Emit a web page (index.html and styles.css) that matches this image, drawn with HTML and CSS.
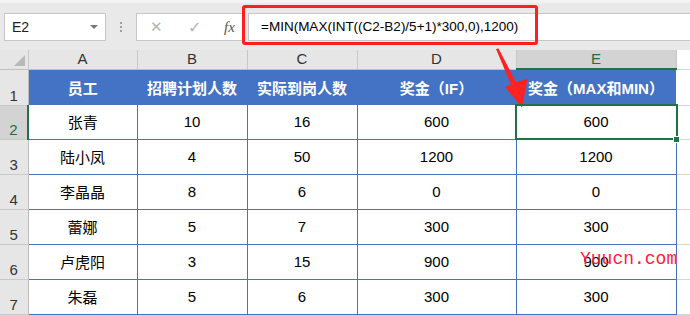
FILE: index.html
```html
<!DOCTYPE html>
<html>
<head>
<meta charset="utf-8">
<link rel="stylesheet" href="styles.css">
</head>
<body>
<div class="app">
  <div class="toolbar">
    <div class="namebox"><span class="ref">E2</span><span class="caret"></span></div>
    <div class="grip"><i></i><i></i><i></i></div>
    <div class="fxbox">
      <span class="cancel">✕</span>
      <span class="ok">✓</span>
      <span class="fx">fx</span>
    </div>
    <div class="formula">=MIN(MAX(INT((C2-B2)/5+1)*300,0),1200)</div>
  </div>
  <table class="sheet">
    <colgroup>
      <col class="c-rh"><col class="c-a"><col class="c-b"><col class="c-c"><col class="c-d"><col class="c-e"><col class="c-f">
    </colgroup>
    <tr class="colhdr">
      <td class="corner"><span class="tri"></span></td>
      <td>A</td><td>B</td><td>C</td><td>D</td><td class="sel">E</td><td class="f"></td>
    </tr>
    <tr class="r1">
      <td class="rh">1</td>
      <td class="hd">员工</td><td class="hd">招聘计划人数</td><td class="hd">实际到岗人数</td><td class="hd">奖金（IF）</td><td class="hd">奖金（MAX和MIN）</td><td class="f"></td>
    </tr>
    <tr class="r2">
      <td class="rh selrow">2</td>
      <td class="d">张青</td><td class="d">10</td><td class="d">16</td><td class="d">600</td><td class="d">600</td><td class="f"></td>
    </tr>
    <tr>
      <td class="rh">3</td>
      <td class="d">陆小凤</td><td class="d">4</td><td class="d">50</td><td class="d">1200</td><td class="d">1200</td><td class="f"></td>
    </tr>
    <tr>
      <td class="rh">4</td>
      <td class="d">李晶晶</td><td class="d">8</td><td class="d">6</td><td class="d">0</td><td class="d">0</td><td class="f"></td>
    </tr>
    <tr>
      <td class="rh">5</td>
      <td class="d">蕾娜</td><td class="d">5</td><td class="d">7</td><td class="d">300</td><td class="d">300</td><td class="f"></td>
    </tr>
    <tr>
      <td class="rh">6</td>
      <td class="d">卢虎阳</td><td class="d">3</td><td class="d">15</td><td class="d">900</td><td class="d">900</td><td class="f"></td>
    </tr>
    <tr>
      <td class="rh">7</td>
      <td class="d">朱磊</td><td class="d">5</td><td class="d">6</td><td class="d">300</td><td class="d">300</td><td class="f"></td>
    </tr>
  </table>

  <div class="redbox"></div>
  <svg class="arrow" width="690" height="315" viewBox="0 0 690 315">
    <polygon points="496,49 498.5,48.5 516,82 527.5,79 522,107.5 505,87 511,84.5" fill="#ff2222"/>
  </svg>
  <div class="selection"></div>
  <div class="handle"></div>
  <div class="watermark">Yuucn.com</div>
</div>
</body>
</html>
```

FILE: styles.css
```css
* { box-sizing: border-box; }
html, body { margin: 0; padding: 0; }
body {
  width: 690px;
  height: 315px;
  overflow: hidden;
  background: #ffffff;
  font-family: "Liberation Sans", "Noto Sans CJK SC", sans-serif;
}
.app {
  position: relative;
  width: 690px;
  height: 315px;
}
.toolbar {
  height: 50px;
  background: #e9e9e9;
  border-top: 3px solid #f3f3f3;
  padding-top: 10px;
  display: flex;
  align-items: flex-start;
}
.namebox {
  margin-left: 4px;
  width: 102px;
  height: 28px;
  background: #fff;
  border: 1px solid #c6c6c6;
  display: flex;
  align-items: center;
  justify-content: space-between;
  padding: 0 7px 0 7px;
  font-size: 14px;
  color: #222;
}
.caret {
  width: 0; height: 0;
  border-left: 4px solid transparent;
  border-right: 4px solid transparent;
  border-top: 4px solid #777;
}
.grip {
  width: 30px;
  height: 28px;
  display: flex;
  flex-direction: column;
  align-items: center;
  justify-content: center;
  gap: 2px;
}
.grip i {
  display: block;
  width: 2px;
  height: 2px;
  background: #a0a0a0;
}
.fxbox {
  width: 107px;
  height: 28px;
  background: #fff;
  border: 1px solid #c6c6c6;
  display: flex;
  align-items: center;
  padding-left: 13px;
  gap: 0;
}
.cancel { color: #b5b5b5; font-size: 15px; width: 38px; }
.ok { color: #b5b5b5; font-size: 16px; width: 36px; font-family: "DejaVu Sans", sans-serif; }
.fx { color: #555; font-family: "Liberation Serif", serif; font-style: italic; font-size: 15px; }
.formula {
  margin-left: 5px;
  flex: 1;
  height: 28px;
  background: #fff;
  border: 1px solid #c6c6c6;
  border-right: none;
  padding-left: 12px;
  font-size: 13.5px;
  line-height: 26px;
  color: #000;
}
.sheet {
  width: 690px;
  table-layout: fixed;
  border-collapse: collapse;
  font-size: 15px;
}
.c-rh { width: 28px; }
.c-a { width: 109px; }
.c-b { width: 110px; }
.c-c { width: 110px; }
.c-d { width: 159px; }
.c-e { width: 160px; }
.c-f { width: 14px; }
.sheet td { padding: 0; text-align: center; white-space: nowrap; overflow: hidden; }
.colhdr td {
  height: 19px;
  background: #e6e6e6;
  border-right: 1px solid #c8c8c8;
  border-bottom: 1px solid #c0c0c0;
  color: #333;
  font-size: 15px;
  line-height: 18px;
}
.colhdr td.sel {
  background: #d3d3d3;
  color: #1f6e43;
  border-bottom: 2px solid #217346;
}
.colhdr td.f { border-right: none; }
.corner { position: relative; }
.tri {
  position: absolute;
  right: 3px;
  bottom: 3px;
  width: 0; height: 0;
  border-left: 11px solid transparent;
  border-bottom: 11px solid #b9b9b9;
}
.rh {
  background: #e6e6e6;
  border-right: 1px solid #bdbdbd;
  border-bottom: 1px solid #c9c9c9;
  vertical-align: bottom;
  color: #333;
  line-height: 16px;
  padding-bottom: 1px !important;
}
.rh.selrow {
  background: #d3d3d3;
  color: #1f6e43;
  border-right: 2px solid #217346;
}
.r1 td { height: 36px; }
.r2 td { height: 34px; }
tr td { height: 35px; }
.hd {
  background: #4472c4;
  color: #fff;
  font-weight: bold;
}
.d {
  border-right: 1px solid #4472c4;
  border-bottom: 1px solid #4472c4;
  color: #000;
}
td.f {
  border-bottom: 1px solid #d4d4d4;
  background: #fff;
}
.redbox {
  position: absolute;
  left: 242px;
  top: 5px;
  width: 296px;
  height: 40px;
  border: 3px solid #ff1f1f;
  border-radius: 3px;
}
.arrow {
  position: absolute;
  left: 0;
  top: 0;
  pointer-events: none;
}
.selection {
  position: absolute;
  left: 515px;
  top: 104px;
  width: 163px;
  height: 36px;
  border: 2px solid #217346;
}
.handle {
  position: absolute;
  left: 673px;
  top: 136px;
  width: 7px;
  height: 7px;
  background: #217346;
  border: 1px solid #fff;
}
.watermark {
  position: absolute;
  left: 580px;
  top: 249px;
  font-family: "Liberation Mono", monospace;
  font-size: 18px;
  color: #ff1a3a;
  line-height: 20px;
}
```
